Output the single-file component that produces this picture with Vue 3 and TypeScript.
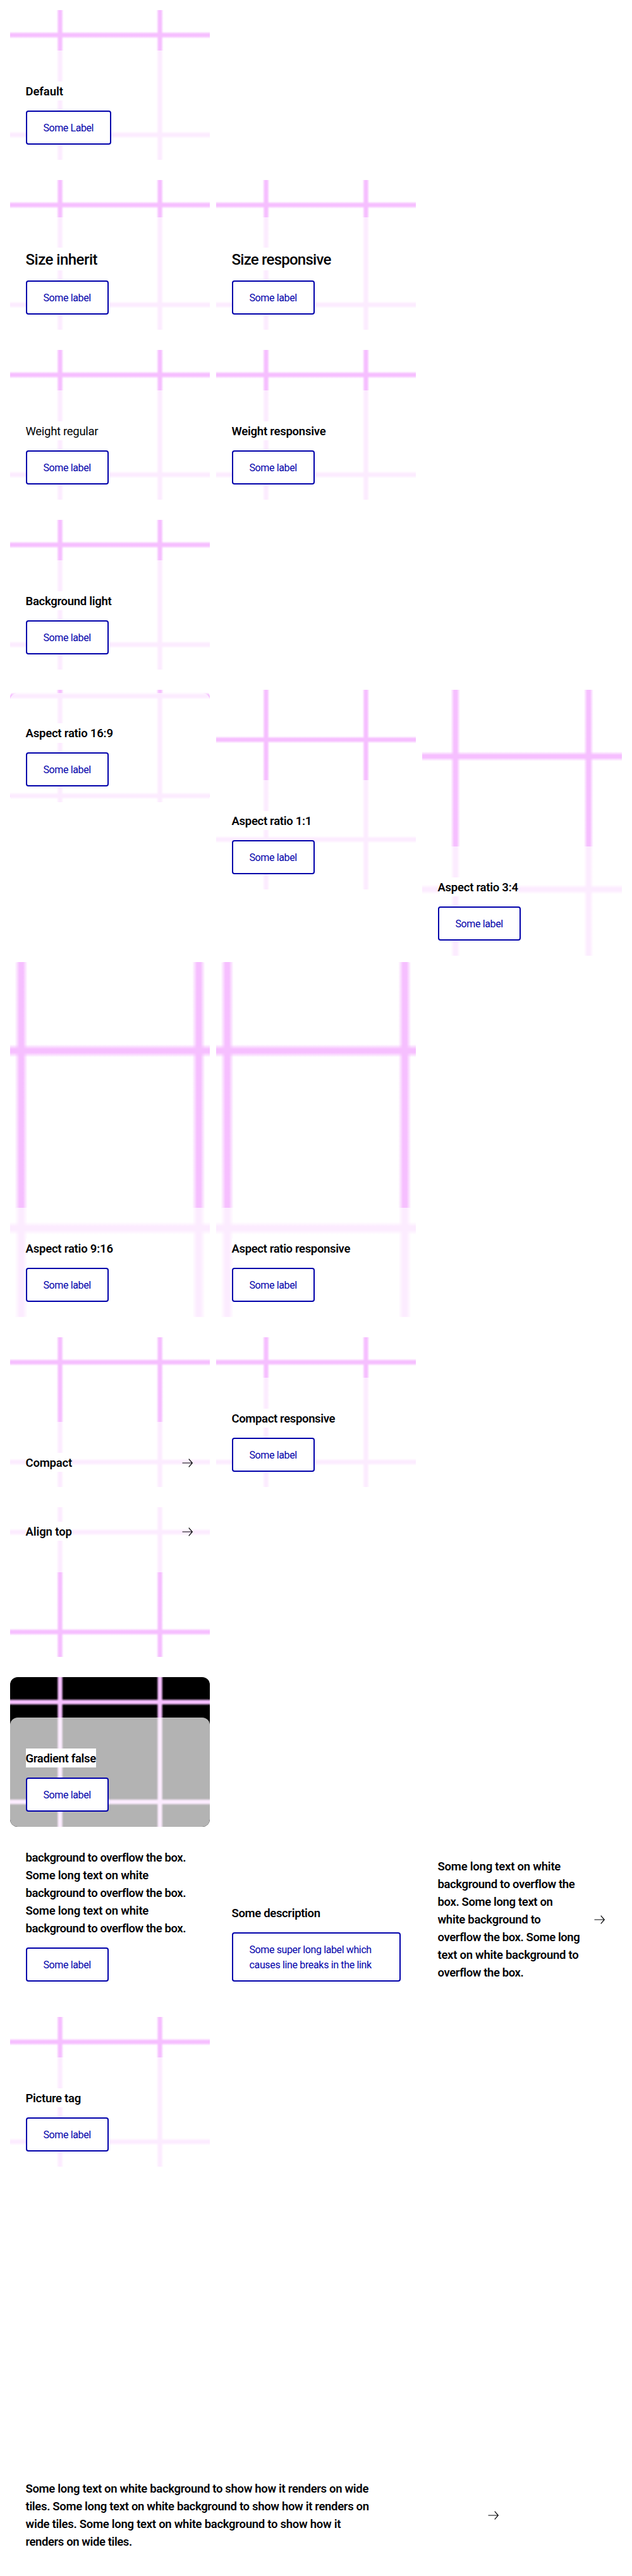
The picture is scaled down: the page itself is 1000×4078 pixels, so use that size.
<script setup lang="ts">
// A text line together with the width it occupies in the tile.
type Line = [text: string, width: number]

interface Tile {
  lines: Line[]
  label?: Line[]
  ratio?: string
  mods?: string[]
}

// Tracks a line in or out so that its set width equals the given one.
const vTrack = {
  mounted(el: HTMLElement, binding: { value: number }) {
    const natural = el.getBoundingClientRect().width
    const count = el.textContent?.length ?? 1
    el.style.letterSpacing = `${((binding.value - natural) / count).toFixed(3)}px`
  },
}

const label: Line[] = [['Some label', 75.3]]
const overflowLine: Line = ['background to overflow the box.', 253.2]
const whiteLine: Line = ['Some long text on white', 194.6]

const groups: Tile[][] = [
  [{ lines: [['Default', 59.3]], label: [['Some Label', 79.5]] }],
  [
    { lines: [['Size inherit', 113.5]], label, mods: ['large'] },
    { lines: [['Size responsive', 157]], label, mods: ['large'] },
  ],
  [
    { lines: [['Weight regular', 114.8]], label, mods: ['regular'] },
    { lines: [['Weight responsive', 148.9]], label },
  ],
  [{ lines: [['Background light', 136]], label }],
  [
    { lines: [['Aspect ratio 16:9', 138.3]], label, ratio: '16 / 9' },
    { lines: [['Aspect ratio 1:1', 126.5]], label, ratio: '1 / 1' },
    { lines: [['Aspect ratio 3:4', 127.3]], label, ratio: '3 / 4', mods: ['tall'] },
    { lines: [['Aspect ratio 9:16', 138.3]], label, ratio: '9 / 16', mods: ['taller'] },
    { lines: [['Aspect ratio responsive', 187.5]], label, ratio: '9 / 16', mods: ['taller'] },
  ],
  [{ lines: [['Compact', 73.4]] }, { lines: [['Compact responsive', 163.6]], label }],
  [{ lines: [['Align top', 73.4]], mods: ['top'] }],
  [{ lines: [['Gradient false', 111.3]], label, mods: ['dark'] }],
  [
    {
      lines: [overflowLine, whiteLine, overflowLine, whiteLine, overflowLine],
      label,
      mods: ['blank'],
    },
    {
      lines: [['Some description', 140.2]],
      label: [
        ['Some super long label which', 193.3],
        ['causes line breaks in the link', 193.3],
      ],
      mods: ['blank', 'stretch'],
    },
    {
      lines: [
        whiteLine,
        ['background to overflow the', 216.5],
        ['box. Some long text on', 182],
        ['white background to', 163],
        ['overflow the box. Some long', 224.5],
        ['text on white background to', 223],
        ['overflow the box.', 135.5],
      ],
      mods: ['blank'],
    },
  ],
  [{ lines: [['Picture tag', 87.4]], label }],
  [
    {
      lines: [
        ['Some long text on white background to show how it renders on wide', 542.6],
        ['tiles. Some long text on white background to show how it renders on', 543.2],
        ['wide tiles. Some long text on white background to show how it', 498.6],
        ['renders on wide tiles.', 168.3],
      ],
      mods: ['blank'],
    },
  ],
]
</script>

<template>
  <main class="page">
    <section v-for="(group, g) in groups" :key="g" class="row" :class="{ 'row-wide': g === groups.length - 1 }">
      <article
        v-for="(tile, t) in group"
        :key="t"
        class="tile"
        :class="tile.mods"
        :style="{ aspectRatio: tile.ratio ?? '4 / 3' }"
      >
        <div class="content" :class="{ compact: !tile.label }">
          <p class="title">
            <span v-for="(line, i) in tile.lines" :key="i" class="line">
              <span v-track="line[1]" class="mark">{{ line[0] }}</span>
            </span>
          </p>
          <a v-if="tile.label" class="link">
            <span v-for="l in tile.label" :key="l[0]" class="line"><span v-track="l[1]">{{ l[0] }}</span></span>
          </a>
          <svg v-else class="arrow" viewBox="0 0 24 24" width="24" height="24">
            <path d="M4.500 12H20.300M14.700 5.600L20.300 12L14.700 18.400" />
          </svg>
        </div>
      </article>
    </section>
  </main>
</template>

<style>
body {
  background: #fff;
}
</style>

<style scoped>
.page {
  display: flex;
  flex-direction: column;
  gap: 32px;
  padding: 16px 16px 15px;
  font-family: Roboto, sans-serif;
}
.row {
  display: grid;
  grid-template-columns: repeat(3, 316px);
  gap: 10px;
  align-items: start;
}
.row-wide {
  grid-template-columns: 800px;
}
.tile {
  --stops: transparent 23.2%, #f6bfff 24.5%, #f6bfff 25.5%, transparent 26.8%, transparent 73.2%, #f6bfff 74.5%, #f6bfff 75.5%, transparent 76.8%;
  display: flex;
  flex-direction: column;
  justify-content: flex-end;
  box-sizing: border-box;
  min-width: 0;
  overflow: hidden;
  border-radius: 12px;
  background-image: linear-gradient(90deg, var(--stops)), linear-gradient(180deg, var(--stops));
  background-size: 316px 316px;
  background-position: center;
}
.tile.tall {
  background-size: 421.330px 421.330px;
}
.tile.taller {
  background-size: 561.780px 561.780px;
}
.tile.dark {
  background-color: #000;
}
.tile.blank {
  background-image: none;
}
.tile.top {
  justify-content: flex-start;
}
.content {
  display: flex;
  flex-direction: column;
  align-items: flex-start;
  gap: 16px;
  padding: 50.500px 24.500px 24.500px;
  border-radius: 12px;
  background: rgba(255, 255, 255, 0.7);
}
.compact {
  flex-direction: row;
  align-items: center;
  justify-content: space-between;
}
.top .content {
  padding: 24.500px 24.500px 50.500px;
}
.title {
  margin: 0;
  font-size: 18.500px;
  font-weight: 600;
  line-height: 28px;
  color: #010205;
  white-space: nowrap;
}
.line {
  display: block;
}
.mark {
  padding: 5px 0 3.500px;
  background: #fff;
}
.large .title {
  font-size: 24px;
  font-weight: 500;
  line-height: 33px;
}
.regular .title {
  font-weight: 400;
}
.link {
  box-sizing: border-box;
  padding: 14px 26px 12px;
  border: 2px solid #00a;
  border-radius: 4px;
  background: #fff;
  color: #00a;
  font-size: 16px;
  line-height: 24px;
  white-space: nowrap;
}
.stretch .link {
  width: 100%;
}
.arrow {
  flex: none;
  fill: none;
  stroke: #010205;
  stroke-width: 1.2;
}
</style>
